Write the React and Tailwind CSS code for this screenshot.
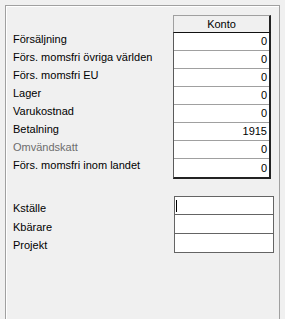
const rows = [
  { label: 'Försäljning', value: '0' },
  { label: 'Förs. momsfri övriga världen', value: '0' },
  { label: 'Förs. momsfri EU', value: '0' },
  { label: 'Lager', value: '0' },
  { label: 'Varukostnad', value: '0' },
  { label: 'Betalning', value: '1915' },
  { label: 'Omvändskatt', value: '0', disabled: true },
  { label: 'Förs. momsfri inom landet', value: '0' },
];

const dims = ['Kställe', 'Kbärare', 'Projekt'];

export default function App() {
  return (
    <div
      className="w-[285px] h-[319px] bg-[#f0f0f0] pt-[5px] pl-[5px] pr-[5px] overflow-hidden text-[11px] text-black"
      style={{ fontFamily: '"Liberation Sans", Arial, sans-serif' }}
    >
      <div className="h-full border-l border-t border-r border-[#a0a0a0] shadow-[inset_1px_1px_0_#ffffff] pt-[9px]">
        {/* header */}
        <div className="flex">
          <div className="w-[167px]" />
          <div className="w-[98px] h-[17px] bg-[#f0f0f0] border-t border-l border-[#a0a0a0] border-r-2 border-r-[#222] flex items-center justify-center leading-none">
            Konto
          </div>
        </div>

        {/* accounts */}
        <div className="flex">
          <div className="w-[167px] flex flex-col">
            {rows.map((r) => (
              <div
                key={r.label}
                className={`h-[18px] pl-[7px] pb-[3px] flex items-center whitespace-nowrap ${r.disabled ? 'text-[#6d6d6d]' : ''}`}
              >
                {r.label}
              </div>
            ))}
          </div>
          <div className="w-[98px] flex flex-col bg-white border-t border-t-[#111] border-l border-l-[#5a5a5a] border-r-2 border-r-[#222] border-b-2 border-b-[#222]">
            {rows.map((r, i) => (
              <div
                key={r.label}
                className={`h-[18px] flex items-center justify-end pr-[2px] ${i < rows.length - 1 ? 'border-b border-[#a0a0a0]' : ''}`}
              >
                {r.value}
              </div>
            ))}
          </div>
        </div>

        {/* dimensions */}
        <div className="flex mt-[17px]">
          <div className="w-[168px] flex flex-col">
            {dims.map((d) => (
              <div key={d} className="h-[18.7px] pl-[7px] pt-[6px] flex items-center">
                {d}
              </div>
            ))}
          </div>
          <div className="w-[100px] flex flex-col bg-white border border-[#646464]">
            {dims.map((d, i) => (
              <div
                key={d}
                className={`h-[18.3px] flex items-center pl-[1px] ${i < dims.length - 1 ? 'border-b border-[#646464]' : ''}`}
              >
                {i === 0 && <div className="w-px h-[12px] bg-black" />}
              </div>
            ))}
          </div>
        </div>
      </div>
    </div>
  );
}
